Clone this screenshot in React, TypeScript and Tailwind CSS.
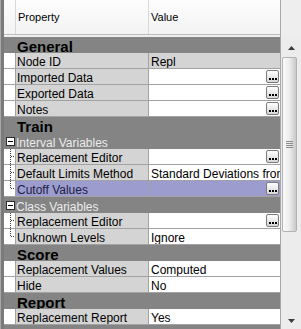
import React from 'react';

type Row =
  | { kind: 'cat'; label: string }
  | { kind: 'sub'; label: string }
  | {
      kind: 'prop';
      label: string;
      value?: string;
      button?: boolean;
      readonly?: boolean;
      tree?: 'mid' | 'end';
      selected?: boolean;
    };

const rows: Row[] = [
  { kind: 'cat', label: 'General' },
  { kind: 'prop', label: 'Node ID', value: 'Repl', readonly: true },
  { kind: 'prop', label: 'Imported Data', button: true },
  { kind: 'prop', label: 'Exported Data', button: true },
  { kind: 'prop', label: 'Notes', button: true },
  { kind: 'cat', label: 'Train' },
  { kind: 'sub', label: 'Interval Variables' },
  { kind: 'prop', label: 'Replacement Editor', button: true, tree: 'mid' },
  { kind: 'prop', label: 'Default Limits Method', value: 'Standard Deviations from Mean', tree: 'mid' },
  { kind: 'prop', label: 'Cutoff Values', button: true, tree: 'end', selected: true },
  { kind: 'sub', label: 'Class Variables' },
  { kind: 'prop', label: 'Replacement Editor', button: true, tree: 'mid' },
  { kind: 'prop', label: 'Unknown Levels', value: 'Ignore', tree: 'end' },
  { kind: 'cat', label: 'Score' },
  { kind: 'prop', label: 'Replacement Values', value: 'Computed' },
  { kind: 'prop', label: 'Hide', value: 'No' },
  { kind: 'cat', label: 'Report' },
  { kind: 'prop', label: 'Replacement Report', value: 'Yes' },
  { kind: 'cat', label: '' },
];

function EllipsisButton() {
  return (
    <div className="absolute right-[1px] top-[1px] w-[13px] h-[13px] rounded-[2px] border border-[#7c7c7c] bg-gradient-to-b from-white to-[#d6d6d6] flex items-end justify-center pb-[2px] gap-[1px]">
      <span className="w-[2px] h-[2px] bg-black" />
      <span className="w-[2px] h-[2px] bg-black" />
      <span className="w-[2px] h-[2px] bg-black" />
    </div>
  );
}

function TreeLines({ end }: { end: boolean }) {
  return (
    <svg width="11" height="16" className="absolute left-0 top-0">
      <line x1="6.5" y1="0" x2="6.5" y2={end ? 8 : 16} stroke="#3a3a3a" strokeDasharray="1 1" />
      <line x1="7" y1="7.5" x2="11" y2="7.5" stroke="#3a3a3a" strokeDasharray="1 1" />
    </svg>
  );
}

function CategoryRow({ label }: { label: string }) {
  return (
    <div className="h-[16px] shrink-0 bg-[#848484] pl-[13px] pt-[3px] text-[15px] leading-[13px] font-bold text-black whitespace-nowrap">
      {label}
    </div>
  );
}

function SubRow({ label }: { label: string }) {
  return (
    <div className="relative h-[16px] shrink-0 bg-[#848484] pl-[12px] pt-[4px] text-[12px] leading-[12px] text-[#ececec] whitespace-nowrap">
      {/* 折叠框 */}
      <div className="absolute left-[2px] top-[4px] w-[9px] h-[9px] border border-[#2e2e2e] bg-white flex items-center justify-center">
        <span className="w-[5px] h-[1px] bg-black" />
      </div>
      {label}
    </div>
  );
}

function PropRow({ row }: { row: Extract<Row, { kind: 'prop' }> }) {
  const sel = row.selected;
  return (
    <div className="flex h-[16px] shrink-0 text-[12px] leading-[12px]">
      <div className="relative w-[12px] h-[16px] bg-white border-r border-b border-[#a2a2a2]">
        {row.tree && <TreeLines end={row.tree === 'end'} />}
      </div>
      <div
        className={`w-[133px] h-[16px] pl-[1px] pt-[3px] border-r border-b border-[#a2a2a2] overflow-hidden whitespace-nowrap ${
          sel ? 'bg-[#9c9ccf] text-[#1c1c44]' : 'bg-[#d4d4d4] text-black'
        }`}
      >
        {row.label}
      </div>
      <div
        className={`relative w-[131px] h-[16px] pl-[2px] pt-[3px] border-b border-[#a2a2a2] overflow-hidden whitespace-nowrap text-black ${
          sel ? 'bg-[#9c9ccf]' : row.readonly ? 'bg-[#d4d4d4]' : 'bg-white'
        }`}
      >
        {row.value}
        {row.button && <EllipsisButton />}
      </div>
    </div>
  );
}

function ScrollBar() {
  return (
    <div className="w-[21px] h-full flex flex-col bg-[#ececec] border-l border-[#a8a8a8]">
      <div className="h-[37px] shrink-0 bg-[#eeeeee]" />
      <div className="h-[20px] shrink-0 flex items-center justify-center pl-[1px] pt-[1px]">
        <svg width="7" height="4">
          <polygon points="3.5,0 7,4 0,4" fill="#3c3c3c" />
        </svg>
      </div>
      <div className="h-[175px] shrink-0 ml-[1px] w-[15px] rounded-[2px] border border-[#b2b2b2] bg-gradient-to-r from-[#fafafa] via-[#ececec] to-[#c9c9c9] flex flex-col items-center justify-center gap-[1px]">
        <span className="w-[7px] h-[1px] bg-[#8c8c8c]" />
        <span className="w-[7px] h-[1px] bg-[#8c8c8c]" />
        <span className="w-[7px] h-[1px] bg-[#8c8c8c]" />
        <span className="w-[7px] h-[1px] bg-[#8c8c8c]" />
      </div>
      <div className="flex-1" />
      <div className="h-[17px] shrink-0 flex items-center justify-center pl-[1px]">
        <svg width="7" height="4">
          <polygon points="0,0 7,0 3.5,4" fill="#3c3c3c" />
        </svg>
      </div>
    </div>
  );
}

export default function App() {
  return (
    <div className="w-[301px] h-[329px] overflow-hidden flex bg-[#ececec] font-['Liberation_Sans',Arial,sans-serif]">
      {/* 左边框 */}
      <div className="w-[4px] h-full flex">
        <div className="w-[1px] h-full bg-[#a8a8a8]" />
        <div className="w-[3px] h-full bg-[#7a7a7a]" />
      </div>

      <div className="w-[276px] h-full flex flex-col overflow-hidden">
        {/* 表头 */}
        <div className="h-[37px] shrink-0 flex flex-col">
          <div className="h-[35px] flex border-b border-[#bdbdbd] bg-gradient-to-b from-[#fdfdfd] to-[#f3f3f3] text-[11px] text-black">
            <div className="w-[12px] border-r border-[#d8d8d8]" />
            <div className="w-[133px] border-r border-[#d8d8d8] pl-[2px] flex items-center">Property</div>
            <div className="w-[131px] pl-[2px] flex items-center">Value</div>
          </div>
          <div className="h-[2px] bg-[#efefef]" />
        </div>

        {rows.map((r, i) =>
          r.kind === 'cat' ? (
            <CategoryRow key={i} label={r.label} />
          ) : r.kind === 'sub' ? (
            <SubRow key={i} label={r.label} />
          ) : (
            <PropRow key={i} row={r} />
          )
        )}
      </div>

      <ScrollBar />
    </div>
  );
}
